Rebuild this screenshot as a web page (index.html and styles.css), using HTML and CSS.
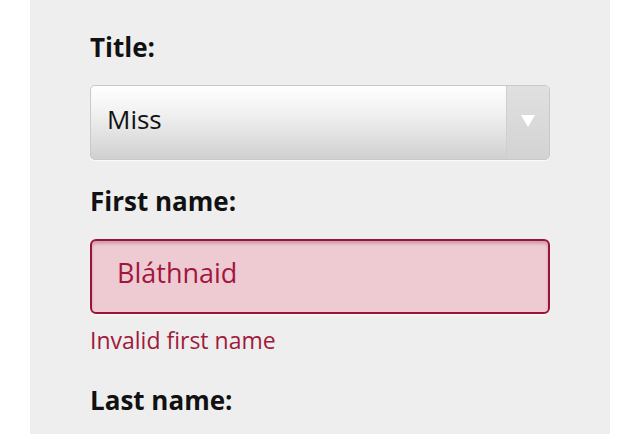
FILE: index.html
```html
<!DOCTYPE html>
<html>
<head>
<meta charset="utf-8">
<link rel="stylesheet" href="styles.css">
</head>
<body>
<div class="page">
  <form class="panel">
    <div class="field">
      <label class="label">Title:</label>
      <div class="select">
        <span class="select-value">Miss</span>
        <span class="select-btn"><svg width="14" height="12" viewBox="0 0 14 12"><polygon points="0,0 14,0 7,12" fill="#ffffff"/></svg></span>
      </div>
    </div>
    <div class="field">
      <label class="label">First name:</label>
      <div class="input error">Bláthnaid</div>
      <div class="error-msg">Invalid first name</div>
    </div>
    <div class="field">
      <label class="label">Last name:</label>
    </div>
  </form>
</div>
</body>
</html>
```
FILE: styles.css
```css
html, body {
  margin: 0;
  padding: 0;
  background: #ffffff;
}
body {
  font-family: "Open Sans", "Noto Sans", sans-serif;
}
.page {
  width: 639px;
  height: 434px;
  overflow: hidden;
  padding-left: 30px;
  box-sizing: border-box;
}
.panel {
  width: 580px;
  height: 434px;
  background: #eeeeee;
  box-sizing: border-box;
  padding: 32px 60px 0 60px;
  display: flex;
  flex-direction: column;
}
.field {
  display: flex;
  flex-direction: column;
}
.label {
  font-weight: 700;
  font-size: 26px;
  line-height: 30px;
  color: #111;
  margin-bottom: 23px;
}
.select {
  height: 75px;
  border: 1px solid #c9c9c9;
  border-radius: 5px;
  box-sizing: border-box;
  background: linear-gradient(#ffffff 0%, #f2f2f2 35%, #d0d0d0 100%);
  box-shadow: 0 1px 1px rgba(255, 255, 255, 0.8);
  display: flex;
  align-items: center;
  margin-bottom: 26px;
  overflow: hidden;
}
.select-value {
  flex: 1;
  padding-left: 16px;
  padding-bottom: 7px;
  font-size: 26px;
  color: #111;
}
.select-btn {
  width: 42px;
  align-self: stretch;
  background: linear-gradient(#e0e0e0, #d3d3d3);
  border-left: 1px solid #cfcfcf;
  display: flex;
  align-items: center;
  justify-content: center;
  padding-bottom: 4px;
}
.input {
  height: 75px;
  box-sizing: border-box;
  border: 2px solid #9c1137;
  border-radius: 6px;
  background: #eecbd3;
  box-shadow: inset 0 3px 3px rgba(120, 40, 60, 0.25), 0 1px 2px rgba(255, 255, 255, 0.9);
  display: flex;
  align-items: center;
  padding-left: 25px;
  padding-bottom: 8px;
  font-size: 27px;
  color: #a1173c;
}
.error-msg {
  color: #a01a3b;
  font-size: 23px;
  line-height: 28px;
  margin-top: 12px;
  margin-bottom: 31px;
}
```
